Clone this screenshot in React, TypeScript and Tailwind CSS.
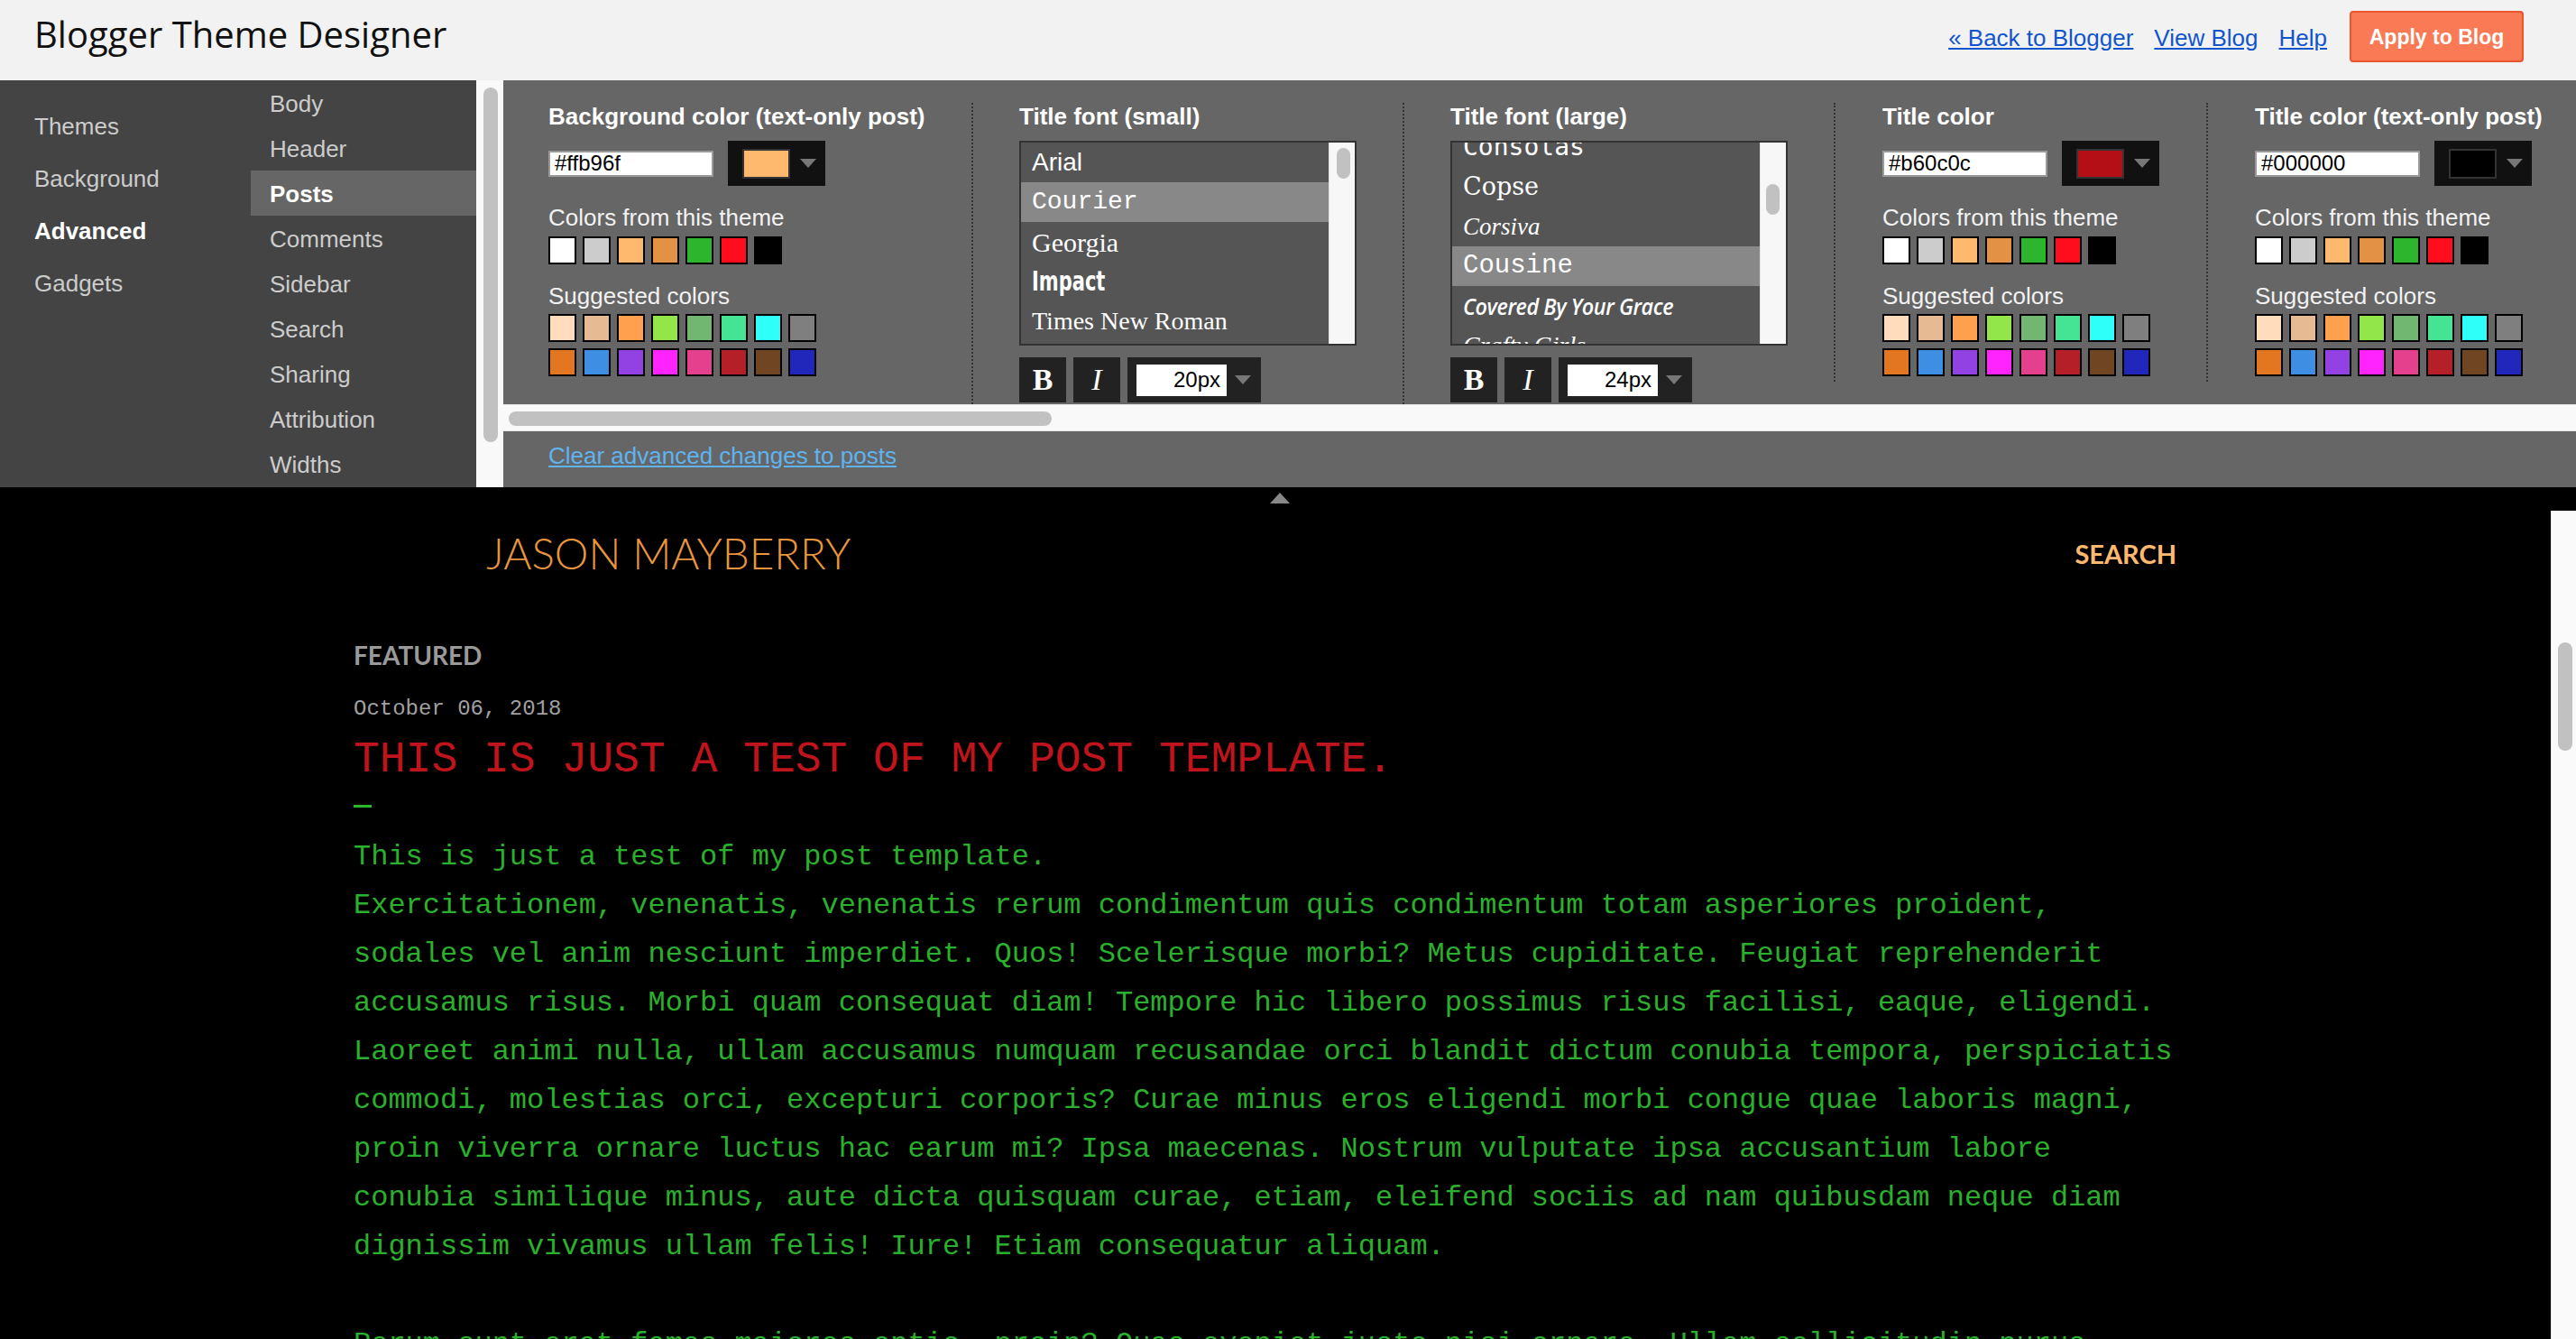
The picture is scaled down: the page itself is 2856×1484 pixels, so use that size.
import React from "react";

const themeColors = ["#ffffff", "#cccccc", "#ffb96f", "#e39245", "#2cb52d", "#ff0d1c", "#000000"];
const sugg1 = ["#ffdcbc", "#e6bb93", "#ffa04e", "#93e64a", "#71b772", "#45e394", "#2efff9", "#7f7f7f"];
const sugg2 = ["#e37620", "#3e8fe4", "#9242e2", "#ff24fe", "#e5408e", "#b51f27", "#704622", "#2027ba"];

function Swatch({ c }: { c: string }) {
  return <div className="w-[31px] h-[31px] border-2 border-black shrink-0" style={{ backgroundColor: c }} />;
}

function Title({ children }: { children: React.ReactNode }) {
  return <div className="text-[26px] leading-[30px] font-bold text-white whitespace-nowrap">{children}</div>;
}

function DownArrow() {
  return <div className="w-0 h-0 border-x-[9px] border-x-transparent border-t-[10px] border-t-[#777]" />;
}

function ColorColumn({
  title,
  hex,
  swatch,
  first,
  width,
}: {
  title: string;
  hex: string;
  swatch: string;
  first?: boolean;
  width: string;
}) {
  return (
    <div
      className={
        first
          ? "shrink-0 pb-[6px] pl-[50px] pr-[53px]"
          : "shrink-0 pb-[6px] pl-[52px] pr-[52px] border-l-2 border-dotted border-[#333]"
      }
    >
      <div className={width}>
        <Title>{title}</Title>
        <div className="mt-[12px] h-[50px] flex items-center">
          <div className="w-[183px] h-[29px] bg-white border-2 border-[#9a9a9a] flex items-center pl-[5px] text-[24px] leading-none text-black">
            {hex}
          </div>
          <div className="ml-[16px] w-[108px] h-[50px] bg-[#111] flex items-center pl-[16px]">
            <div className="w-[53px] h-[33px] border-2 border-[#333]" style={{ backgroundColor: swatch }} />
            <div className="ml-[11px]">
              <DownArrow />
            </div>
          </div>
        </div>
        <div className="mt-[20px] text-[26px] leading-[30px] text-[#f2f2f2] whitespace-nowrap">Colors from this theme</div>
        <div className="mt-[6px] flex gap-[7px]">
          {themeColors.map((c) => (
            <Swatch key={c} c={c} />
          ))}
        </div>
        <div className="mt-[20px] text-[26px] leading-[30px] text-[#f2f2f2] whitespace-nowrap">Suggested colors</div>
        <div className="mt-[5px] flex gap-[7px]">
          {sugg1.map((c) => (
            <Swatch key={c} c={c} />
          ))}
        </div>
        <div className="mt-[7px] flex gap-[7px]">
          {sugg2.map((c) => (
            <Swatch key={c} c={c} />
          ))}
        </div>
      </div>
    </div>
  );
}

type FontItem = { label: string; cls: string; sel?: boolean };

function FontColumn({
  title,
  items,
  listCls,
  thumbCls,
  size,
}: {
  title: string;
  items: FontItem[];
  listCls: string;
  thumbCls: string;
  size: string;
}) {
  return (
    <div className="shrink-0 pl-[51px] pr-[51px] pb-[10px] border-l-2 border-dotted border-[#333]">
      <Title>{title}</Title>
      <div className="mt-[12px] w-[374px] h-[227px] border-2 border-[#333] bg-[#555] flex">
        <div className="flex-1 overflow-hidden">
          <div className={listCls}>
            {items.map((it) => (
              <div
                key={it.label}
                className={
                  it.sel
                    ? "h-[44px] flex items-center pl-[12px] text-white whitespace-nowrap bg-[#888]"
                    : "h-[44px] flex items-center pl-[12px] text-white whitespace-nowrap"
                }
              >
                <span className={it.cls}>{it.label}</span>
              </div>
            ))}
          </div>
        </div>
        <div className={thumbCls}>
          <div className="w-[15px] h-[34px] rounded-full bg-[#c1c1c1]" />
        </div>
      </div>
      <div className="mt-[13px] flex gap-[8px]">
        <div className="w-[52px] h-[50px] bg-[#222] flex items-center justify-center text-white font-['Liberation_Serif',serif] font-bold text-[34px] leading-none">
          B
        </div>
        <div className="w-[52px] h-[50px] bg-[#222] flex items-center justify-center text-white font-['Liberation_Serif',serif] italic text-[34px] leading-none">
          I
        </div>
        <div className="w-[148px] h-[50px] bg-[#222] flex items-center pl-[10px]">
          <div className="w-[100px] h-[35px] bg-white flex items-center justify-end pr-[7px] text-[24px] leading-none text-black">
            {size}
          </div>
          <div className="ml-[9px]">
            <DownArrow />
          </div>
        </div>
      </div>
    </div>
  );
}

const smallFonts: FontItem[] = [
  { label: "Arial", cls: "font-['Liberation_Sans',sans-serif] text-[28px]" },
  { label: "Courier", cls: "font-['Liberation_Mono',monospace] text-[28px]", sel: true },
  { label: "Georgia", cls: "font-['Liberation_Serif',serif] text-[30px]" },
  {
    label: "Impact",
    cls: "inline-block origin-left scale-x-[0.7] font-['DejaVu_Sans',sans-serif] font-bold text-[30px] leading-none",
  },
  { label: "Times New Roman", cls: "font-['Liberation_Serif',serif] text-[28px]" },
];

const largeFonts: FontItem[] = [
  { label: "Consolas", cls: "font-['DejaVu_Sans_Mono',monospace] text-[28px]" },
  { label: "Copse", cls: "font-['DejaVu_Serif',serif] text-[27px]" },
  { label: "Corsiva", cls: "font-['Liberation_Serif',serif] italic text-[27px]" },
  { label: "Cousine", cls: "font-['Liberation_Mono',monospace] text-[29px]", sel: true },
  {
    label: "Covered By Your Grace",
    cls: "inline-block origin-left scale-x-[0.9] font-['Open_Sans',sans-serif] italic font-semibold text-[26px] tracking-[-0.5px]",
  },
  { label: "Crafty Girls", cls: "font-['Liberation_Serif',serif] italic text-[28px]" },
];

const bodyLines = [
  "This is just a test of my post template.",
  "Exercitationem, venenatis, venenatis rerum condimentum quis condimentum totam asperiores proident,",
  "sodales vel anim nesciunt imperdiet. Quos! Scelerisque morbi? Metus cupiditate. Feugiat reprehenderit",
  "accusamus risus. Morbi quam consequat diam! Tempore hic libero possimus risus facilisi, eaque, eligendi.",
  "Laoreet animi nulla, ullam accusamus numquam recusandae orci blandit dictum conubia tempora, perspiciatis",
  "commodi, molestias orci, excepturi corporis? Curae minus eros eligendi morbi congue quae laboris magni,",
  "proin viverra ornare luctus hac earum mi? Ipsa maecenas. Nostrum vulputate ipsa accusantium labore",
  "conubia similique minus, aute dicta quisquam curae, etiam, eleifend sociis ad nam quibusdam neque diam",
  "dignissim vivamus ullam felis! Iure! Etiam consequatur aliquam.",
];

export default function App() {
  const primary = [
    { t: "Themes" },
    { t: "Background" },
    { t: "Advanced", active: true },
    { t: "Gadgets" },
  ];
  const secondary = [
    { t: "Body" },
    { t: "Header" },
    { t: "Posts", active: true },
    { t: "Comments" },
    { t: "Sidebar" },
    { t: "Search" },
    { t: "Sharing" },
    { t: "Attribution" },
    { t: "Widths" },
  ];

  return (
    <div className="w-[2856px] h-[1484px] overflow-hidden font-['Liberation_Sans',Arial,sans-serif] bg-black">
      {/* Top bar */}
      <div className="h-[89px] bg-[#f2f2f2] flex justify-between">
        <div className="pl-[38px] pt-[11px] font-['Open_Sans',sans-serif] text-[40px] leading-[54px] text-[#111] whitespace-nowrap">
          Blogger Theme Designer
        </div>
        <div className="flex items-center h-[57px] mt-[12px] mr-[58px] text-[26px] leading-[30px] whitespace-nowrap">
          <a className="pt-[3px] text-[#1155cc] underline cursor-pointer">« Back to Blogger</a>
          <a className="pt-[3px] ml-[23px] text-[#1155cc] underline cursor-pointer">View Blog</a>
          <a className="pt-[3px] ml-[23px] text-[#1155cc] underline cursor-pointer">Help</a>
          <div className="ml-[25px] w-[193px] h-[57px] rounded-[4px] border-2 border-[#ea5630] bg-[#f97a54] flex items-center justify-center text-white font-bold text-[23px]">
            Apply to Blog
          </div>
        </div>
      </div>

      {/* Designer area */}
      <div className="h-[451px] flex">
        {/* Nav */}
        <div className="w-[528px] shrink-0 bg-[#444] flex">
          <div className="w-[278px] pt-[22px]">
            {primary.map((p) => (
              <div
                key={p.t}
                className={
                  p.active
                    ? "h-[58px] flex items-center pl-[38px] text-[26px] text-white font-bold"
                    : "h-[58px] flex items-center pl-[38px] text-[26px] text-[#cccccc]"
                }
              >
                {p.t}
              </div>
            ))}
          </div>
          <div className="w-[250px]">
            {secondary.map((s) => (
              <div
                key={s.t}
                className={
                  s.active
                    ? "h-[50px] flex items-center pl-[21px] pt-[3px] text-[26px] text-white font-bold bg-[#666]"
                    : "h-[50px] flex items-center pl-[21px] pt-[3px] text-[26px] text-[#cccccc]"
                }
              >
                {s.t}
              </div>
            ))}
          </div>
        </div>
        {/* Vertical scrollbar */}
        <div className="w-[30px] shrink-0 bg-[#f9f9f9] pt-[8px] pl-[8px]">
          <div className="w-[16px] h-[393px] rounded-full bg-[#c1c1c1]" />
        </div>
        {/* Settings panel */}
        <div className="flex-1 min-w-0 flex flex-col">
          <div className="h-[359px] bg-[#666] overflow-hidden flex items-start pt-[25px]">
            <ColorColumn first title="Background color (text-only post)" hex="#ffb96f" swatch="#ffb96f" width="w-[416px]" />
            <FontColumn
              title="Title font (small)"
              items={smallFonts}
              listCls=""
              thumbCls="w-[29px] bg-[#f7f7f7] border-l border-[#e3e3e3] pt-[6px] pl-[8px]"
              size="20px"
            />
            <FontColumn
              title="Title font (large)"
              items={largeFonts}
              listCls="mt-[-17px]"
              thumbCls="w-[29px] bg-[#f7f7f7] border-l border-[#e3e3e3] pt-[46px] pl-[6px]"
              size="24px"
            />
            <ColorColumn title="Title color" hex="#b60c0c" swatch="#b40f17" width="w-[307px]" />
            <ColorColumn title="Title color (text-only post)" hex="#000000" swatch="#000000" width="w-[320px]" />
          </div>
          {/* Horizontal scrollbar */}
          <div className="h-[30px] bg-[#f9f9f9] border-y border-[#e8e8e8] pt-[7px] pl-[6px]">
            <div className="w-[602px] h-[16px] rounded-full bg-[#c1c1c1]" />
          </div>
          <div className="flex-1 bg-[#666] pl-[50px] pt-[12px]">
            <a className="text-[26px] leading-[30px] text-[#5fb4f0] underline cursor-pointer whitespace-nowrap">
              Clear advanced changes to posts
            </a>
          </div>
        </div>
      </div>

      {/* Preview */}
      <div className="h-[944px] bg-black flex flex-col">
        <div className="h-[26px] shrink-0 pl-[1408px] pt-[6px]">
          <div className="w-0 h-0 border-x-[11px] border-x-transparent border-b-[12px] border-b-[#888]" />
        </div>
        <div className="flex-1 min-h-0 flex">
          <div className="flex-1 min-w-0 overflow-hidden">
            <div className="mt-[19px] flex items-center justify-between pl-[539px] pr-[415px]">
              <div className="font-['Lato',sans-serif] font-light text-[47.5px] leading-[56px] text-[#e8953f] whitespace-nowrap">
                JASON MAYBERRY
              </div>
              <div className="font-['Lato',sans-serif] font-bold text-[29px] leading-[35px] text-[#ffb96f]">SEARCH</div>
            </div>
            <div className="pl-[392px]">
              <div className="mt-[68px] font-['Lato',sans-serif] font-bold text-[28px] leading-[34px] text-[#9a9a9a]">
                FEATURED
              </div>
              <div className="mt-[29px] font-['Liberation_Mono',monospace] text-[24px] leading-[28px] text-[#a0a0a0]">
                October 06, 2018
              </div>
              <div className="mt-[14px] font-['Liberation_Mono',monospace] text-[48px] leading-[56px] text-[#c0141c] whitespace-nowrap">
                THIS IS JUST A TEST OF MY POST TEMPLATE.
              </div>
              <div className="mt-[22px] w-[20px] h-[3px] bg-[#2cb52d]" />
              <div className="mt-[28px] font-['Liberation_Mono',monospace] text-[32px] leading-[54px] text-[#2bb02d]">
                {bodyLines.map((l, i) => (
                  <div key={i} className="whitespace-pre">
                    {l}
                  </div>
                ))}
                <div className="h-[54px]" />
                <div className="whitespace-pre">
                  Rerum sunt erat fames maiores optio, proin? Quas eveniet justo nisi ornare. Ullam sollicitudin purus
                </div>
              </div>
            </div>
          </div>
          <div className="w-[28px] shrink-0 bg-[#fafafa] border-l border-[#e8e8e8] pt-[146px] pl-[7px]">
            <div className="w-[16px] h-[120px] rounded-full bg-[#c1c1c1]" />
          </div>
        </div>
      </div>
    </div>
  );
}
